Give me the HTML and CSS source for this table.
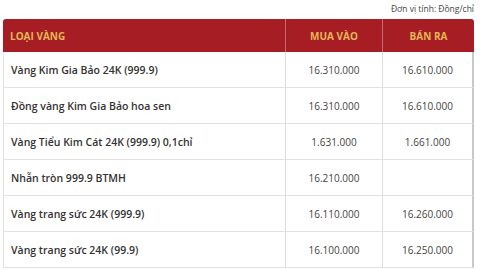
FILE: index.html
```html
<!DOCTYPE html>
<html lang="vi">
<head>
<meta charset="utf-8">
<link rel="stylesheet" href="styles.css">
</head>
<body>
<div class="wrap">
  <div class="unit">Đơn vị tính: Đồng/chỉ</div>
  <table class="prices">
    <thead>
      <tr><th class="name">LOẠI VÀNG</th><th>MUA VÀO</th><th>BÁN RA</th></tr>
    </thead>
    <tbody>
      <tr><td class="name">Vàng Kim Gia Bảo 24K (999.9)</td><td>16.310.000</td><td>16.610.000</td></tr>
      <tr><td class="name">Đồng vàng Kim Gia Bảo hoa sen</td><td>16.310.000</td><td>16.610.000</td></tr>
      <tr><td class="name">Vàng Tiểu Kim Cát 24K (999.9) 0,1chỉ</td><td>1.631.000</td><td>1.661.000</td></tr>
      <tr><td class="name">Nhẫn tròn 999.9 BTMH</td><td>16.210.000</td><td></td></tr>
      <tr><td class="name">Vàng trang sức 24K (999.9)</td><td>16.110.000</td><td>16.260.000</td></tr>
      <tr><td class="name">Vàng trang sức 24K (99.9)</td><td>16.100.000</td><td>16.250.000</td></tr>
    </tbody>
  </table>
</div>
</body>
</html>
```
FILE: styles.css
```css
html, body {
  margin: 0;
  padding: 0;
  background: #ffffff;
  overflow: hidden;
}
.wrap {
  padding: 3px 6px 0 3px;
  font-family: "Open Sans", "Noto Sans", sans-serif;
  color: #333;
}
.unit {
  text-align: right;
  font-size: 8.5px;
  color: #444;
  height: 16px;
  line-height: 12px;
}
.prices {
  width: 471px;
  border-collapse: separate;
  border-spacing: 0;
  table-layout: fixed;
}
.prices th {
  background: #a61e24;
  color: #e4b657;
  font-weight: 700;
  font-size: 10px;
  height: 33px;
  padding: 0;
  text-align: center;
  border-left: 1px solid #c56a6d;
}
.prices th.name {
  text-align: left;
  padding-left: 7px;
  border-left: none;
  border-top-left-radius: 3px;
  width: 275px;
}
.prices th:last-child {
  border-top-right-radius: 3px;
  width: 91px;
}
.prices td {
  height: 35px;
  padding: 0;
  text-align: center;
  font-size: 10px;
  color: #444;
  border-bottom: 1px solid #e2e2e2;
  border-left: 1px solid #dcdcdc;
}
.prices td.name {
  text-align: left;
  padding-left: 7px;
  font-size: 10.5px;
  font-weight: 600;
  color: #333;
  border-left: 1px solid #e2e2e2;
}
.prices td:last-child {
  border-right: 2px solid #c8c8c8;
}
```
